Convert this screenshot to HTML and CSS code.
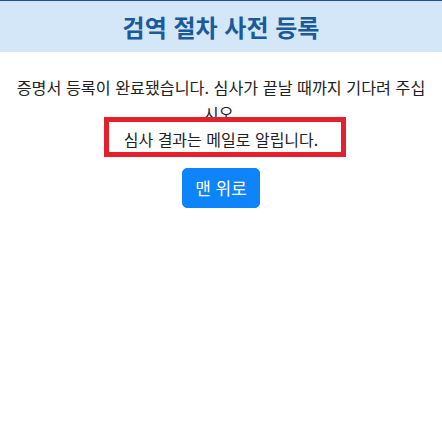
FILE: index.html
```html
<!DOCTYPE html>
<html lang="ko">
<head>
  <meta charset="UTF-8">
  <meta name="viewport" content="width=device-width, initial-scale=1.0">
  <title>검역 절차 사전 등록</title>
  <link rel="stylesheet" href="styles.css">
</head>
<body>
<header class="topbar">
  <h1>검역 절차 사전 등록</h1>
</header>

<main class="content">
  <p class="message">증명서 등록이 완료됐습니다. 심사가 끝날 때까지 기다려 주십<br>시오.</p>
  <p class="note">심사 결과는 메일로 알립니다.</p>
  <button class="button">맨 위로</button>
</main>
</body>
</html>
```

FILE: styles.css
```css
body {
  margin: 0;
  padding: 0;
  background-color: white;
  font-family: "Noto Sans CJK KR", sans-serif;
  color: #222;
}
.topbar {
  height: 51px;
  border-top: 1px solid #1d4f9c;
  background-color: #d3e7f9;
  display: flex;
  align-items: center;
  justify-content: center;
}
.topbar h1 {
  margin: 0;
  font-size: 24px;
  font-weight: 700;
  line-height: 1;
  color: #1a5a9b;
}
.content {
  padding: 22px 13px 0;
  display: flex;
  flex-direction: column;
  align-items: center;
}
.message {
  margin: 0;
  width: 100%;
  text-align: center;
  font-size: 16.2px;
  line-height: 26px;
}
.note {
  position: relative;
  margin: 0;
  font-size: 16px;
  line-height: 26px;
}
/* red highlight box drawn over the note */
.note::after {
  content: "";
  position: absolute;
  top: -9px;
  bottom: -5px;
  left: -20px;
  right: -28px;
  border: 5px solid #e3202b;
}
.button {
  margin-top: 16px;
  padding: 6px 12px;
  font-family: inherit;
  font-size: 17px;
  line-height: 26px;
  color: white;
  background-color: #0d84f9;
  border: 1px solid #0d84f9;
  border-radius: 5px;
  cursor: pointer;
}
```
